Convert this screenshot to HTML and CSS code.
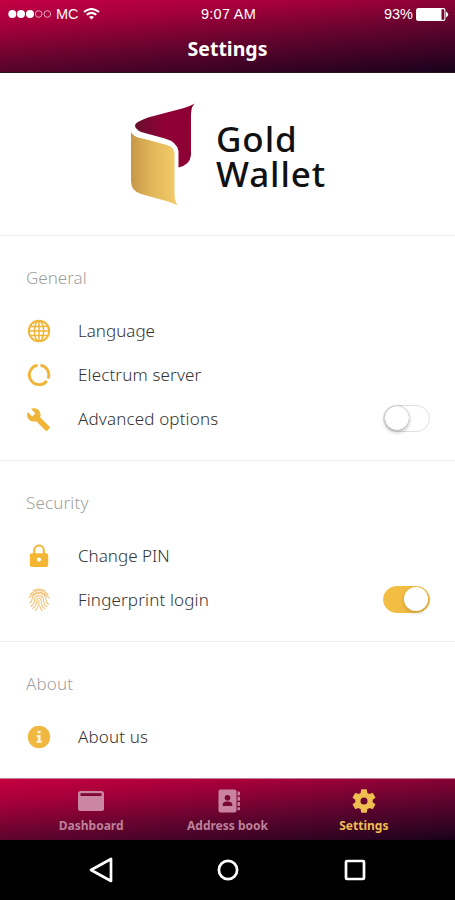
FILE: index.html
```html
<!DOCTYPE html>
<html lang="en">
<head>
<meta charset="utf-8">
<title>Settings</title>
<link rel="stylesheet" href="styles.css">
</head>
<body>
<div class="app">
  <header class="header">
    <div class="status">
      <div class="carrier">
        <svg width="44" height="10" viewBox="0 0 44 10"><g fill="#fff"><circle cx="4.300" cy="5" r="4"/><circle cx="13" cy="5" r="4"/><circle cx="22" cy="5" r="4"/></g><g fill="none" stroke="#e7a9bd" stroke-width="1"><circle cx="30.700" cy="5" r="3.300"/><circle cx="39.300" cy="5" r="3.300"/></g></svg>
        <span class="network">MC</span>
        <svg class="wifi" width="17" height="12" viewBox="0 0 17 12" fill="none" stroke="#fff" stroke-width="2"><path d="M1 4Q8.500-2 16 4M3.700 6.800Q8.500 3 13.300 6.800"/><path d="M6 9Q8.500 7 11 9L8.500 11.500Z" fill="#fff" stroke="none"/></svg>
      </div>
      <span class="time">9:07 AM</span>
      <div class="power">
        <span>93%</span>
        <svg width="33" height="13" viewBox="0 0 33 13"><rect x=".6" y=".6" width="28.300" height="11.800" rx="1.500" fill="none" stroke="#fff" stroke-width="1.100"/><rect x="1" y="1" width="24.500" height="11" fill="#fff"/><path d="M30 3.500Q34.500 6.500 30 9.500Z" fill="#fff"/></svg>
      </div>
    </div>
    <h1 class="title">Settings</h1>
  </header>

  <main class="content">
    <div class="brand">
      <svg class="mark" width="66" height="104" viewBox="0 0 66 104">
        <defs>
          <linearGradient id="red" x1="0" x2="1" y1=".5" y2=".3"><stop offset="0" stop-color="#65102d"/><stop offset=".5" stop-color="#900036"/><stop offset="1" stop-color="#8b0034"/></linearGradient>
          <linearGradient id="gold" x1="0" x2="1"><stop offset="0" stop-color="#c7974a"/><stop offset=".4" stop-color="#dfb457"/><stop offset="1" stop-color="#f4cd6b"/></linearGradient>
        </defs>
        <path fill="url(#red)" d="M65 .5C61 4 61.500 8 61 12V52Q60 62 48.500 64.500V48Q47 39 35 35.500L11 29Q-1 22 11 17.500Q14 16 18 14.500L54 5Q60 3 65 .5Z"/>
        <path fill="url(#gold)" d="M1 28C3 34 10 35 15 36L37 42Q44.500 44 44.500 51V88C44.500 95 45 99 48 102.500L38 98.500L11 91Q1 88 1 78Z"/>
        <path fill="none" stroke="#fff" stroke-width="2.600" d="M1 26C3 32.500 10 33.500 15 34.500L38 40.500Q46.500 43 46.500 51V80"/>
      </svg>
      <div class="wordmark">Gold<br>Wallet</div>
    </div>

    <section class="group">
      <h2>General</h2>
      <div class="row">
        <svg class="icon" viewBox="0 0 24 24" fill="none" stroke="#f0b537" stroke-width="1.500"><circle cx="12" cy="12" r="10.200" stroke-width="1.900"/><ellipse cx="12" cy="12" rx="4.600" ry="10.200"/><path d="M12 2v20M2 12h20M3.200 7.500h17.600M3.200 16.500h17.600"/></svg>
        <span class="label">Language</span>
      </div>
      <div class="row">
        <svg class="icon" viewBox="0 0 24 24" fill="none" stroke="#f0b537" stroke-width="2.900"><path d="M13.500 2.200A9.800 9.800 0 0 1 21.100 15.500M19.800 18A9.800 9.800 0 1 1 10.500 2.200"/></svg>
        <span class="label wide">Electrum server</span>
      </div>
      <div class="row">
        <svg class="icon wrench" viewBox="0 0 24 24" fill="#f0b537"><path d="M22.700 19l-9.100-9.100c.9-2.300.4-5-1.500-6.900-2-2-5-2.400-7.400-1.300L9 6 6 9 1.600 4.700C.4 7.100.9 10.100 2.900 12.100c1.900 1.900 4.600 2.400 6.900 1.500l9.100 9.100c.4.400 1 .4 1.400 0l2.300-2.300c.5-.4.5-1.100.1-1.400z"/></svg>
        <span class="label wide">Advanced options</span>
        <span class="switch"><span class="knob"></span></span>
      </div>
    </section>

    <section class="group">
      <h2 class="wide">Security</h2>
      <div class="row">
        <svg class="icon" viewBox="0 0 24 24"><rect x="2.800" y="9.200" width="18.400" height="13.800" rx="2" fill="#f3b632"/><path d="M7.200 10V6.300a4.800 4.800 0 0 1 9.600 0V10" fill="none" stroke="#f3b632" stroke-width="2.100"/><circle cx="12" cy="15.600" r="2.100" fill="#fff"/></svg>
        <span class="label">Change PIN</span>
      </div>
      <div class="row">
        <svg class="icon" viewBox="0 0 24 24" fill="none" stroke="#f2c174" stroke-width="1.050" stroke-linecap="round"><path d="M6 2.600Q12-.6 18 2.600M3 6.500Q12-1.500 21 6.500M1.800 10Q12-1.500 22.200 10M3 15Q5 13.500 5 11.500C5 3.500 19 3.500 19 11.500Q19 15 21.500 16M4 18Q7.500 16 7.500 12C7.500 6.500 16.500 6.500 16.500 12Q16.500 17 20 18.500M6 20.500Q9.800 17 9.800 12.500C9.800 9.500 14.200 9.500 14.200 12.500Q14.200 18.500 18 20.800M12 12.500Q12 18.500 8.500 22.500M12.700 18Q13.500 21 15.300 22.800"/></svg>
        <span class="label wide">Fingerprint login</span>
        <span class="switch on"><span class="knob"></span></span>
      </div>
    </section>

    <section class="group">
      <h2 class="wide">About</h2>
      <div class="row">
        <svg class="icon" viewBox="0 0 24 24"><circle cx="12" cy="12" r="11.200" fill="#f0b840"/><path d="M10.500 5.800h3.200v2.500h-3.200zM9.600 10h4v6h1.200v1.700H9.400V16h1.400v-4.300H9.600z" fill="#fff4d8"/></svg>
        <span class="label wide">About us</span>
      </div>
    </section>
  </main>

  <nav class="tabs">
    <div class="tab">
      <svg width="28" height="24" viewBox="0 0 28 24"><rect x="1" y="2" width="26" height="20" rx="2.500" fill="#cb86a3"/><path d="M3.500 4.200h21v2.800h-21z" fill="#7d0634"/></svg>
      <span>Dashboard</span>
    </div>
    <div class="tab">
      <svg width="28" height="24" viewBox="-2 0 28 24"><rect x="3.500" y=".5" width="18" height="23" rx="2" fill="#c883a1"/><path d="M22.500 2.500H24q1 0 1 1v2q0 1-1 1h-1.500zM22.500 7.800H24q1 0 1 1v2q0 1-1 1h-1.500zM22.500 13H24q1 0 1 1v2q0 1-1 1h-1.500zM22.500 18.200H24q1 0 1 1v1q0 1-1 1h-1.500z" fill="#c883a1"/><circle cx="12.500" cy="8.700" r="2.800" fill="#780733"/><path d="M7.700 17v-1.500q0-3 4.800-3t4.800 3V17z" fill="#780733"/></svg>
      <span>Address book</span>
    </div>
    <div class="tab active">
      <svg width="28" height="28" viewBox="0 0 24 24" fill="#efbd50"><path d="M19.430 12.980c.04-.32.07-.64.07-.98s-.03-.66-.07-.98l2.110-1.650c.19-.15.24-.42.12-.64l-2-3.460c-.12-.22-.39-.3-.61-.22l-2.490 1c-.52-.4-1.080-.73-1.690-.98l-.38-2.650C14.460 2.180 14.250 2 14 2h-4c-.25 0-.46.18-.49.42l-.38 2.650c-.61.25-1.170.59-1.690.98l-2.490-1c-.23-.09-.49 0-.61.22l-2 3.460c-.13.22-.07.49.12.64l2.110 1.650c-.04.32-.07.65-.07.98s.03.66.07.98l-2.110 1.650c-.19.15-.24.42-.12.64l2 3.460c.12.22.39.3.61.22l2.490-1c.52.4 1.080.73 1.690.98l.38 2.650c.03.24.24.42.49.42h4c.25 0 .46-.18.49-.42l.38-2.650c.61-.25 1.170-.59 1.690-.98l2.490 1c.23.09.49 0 .61-.22l2-3.460c.12-.22.07-.49-.12-.64zM12 15a3 3 0 1 1 0-6 3 3 0 0 1 0 6z"/></svg>
      <span>Settings</span>
    </div>
  </nav>
  <div class="system">
    <svg width="26" height="28" viewBox="0 0 26 28"><path d="M23 3v22L3 14Z" fill="none" stroke="#fff" stroke-width="2.700" stroke-linejoin="round"/></svg>
    <svg width="24" height="24" viewBox="1 0 24 24"><circle cx="12" cy="12" r="9.100" fill="none" stroke="#fff" stroke-width="2.700"/></svg>
    <svg width="24" height="24" viewBox="0 0 24 24"><rect x="3" y="3" width="18" height="18" rx="1" fill="none" stroke="#fff" stroke-width="2.700"/></svg>
  </div>
</div>
</body>
</html>
```
FILE: styles.css
```css
* { box-sizing: border-box; }
body { margin: 0; background: #fff; font-family: "Noto Sans", "Open Sans", sans-serif; }
svg { display: block; flex: none; }
.app { width: 455px; height: 900px; display: flex; flex-direction: column; overflow: hidden; }
.header { height: 73px; flex: none; color: #fff; background: linear-gradient(175deg, #c30043 0%, #a6003b 24%, #65042e 55%, #25021f 93%, #16021a 100%); border-bottom: 1px solid #26121e; }
.status { height: 28px; padding: 0 6px 0 8px; display: grid; grid-template-columns: 1fr auto 1fr; align-items: center; font: 14.500px/28px "Liberation Sans", sans-serif; }
.carrier, .power { display: flex; align-items: center; }
.network { margin: 0 4px 0 4px; letter-spacing: 0; }
.time { letter-spacing: .25px; }
.power { justify-content: flex-end; gap: 3px; }
.title { margin: 8px 0 0; font-size: 19.500px; line-height: 26px; font-weight: 700; text-align: center; }
.content { height: 705px; flex: none; }
.brand { height: 163px; padding: 30px 0 0 130px; display: flex; align-items: flex-start; gap: 20px; border-bottom: 1px solid #eee; }
.wordmark { margin-top: 18px; color: #111; font-size: 35px; font-weight: 500; line-height: 35px; letter-spacing: .9px; white-space: nowrap; }
.group { padding: 31px 25px 19px 26px; border-bottom: 1px solid #eee; }
.group:last-child { border-bottom: 0; }
.group h2 { margin: 0 0 20px; color: #a0a0a0; font-size: 17px; font-weight: 300; line-height: 22px; }
.row { height: 44px; display: flex; align-items: center; }
.icon { width: 24px; height: 24px; margin: 0 27px 0 1px; }
.wrench { width: 25px; height: 25px; margin: 0 27px 0 0; }
.label { color: #333; font-size: 17px; font-weight: 300; line-height: 24px; white-space: nowrap; }
.group .wide { letter-spacing: .15px; }
.switch { width: 47px; height: 27px; margin: -2px 0 0 auto; padding: 1px; display: flex; border: 1px solid #dedede; border-radius: 14px; background: #fff; }
.knob { width: 24px; height: 24px; margin-top: -.5px; border-radius: 50%; background: #fff; box-shadow: 0 2px 4px rgba(0,0,0,.28), 0 0 1px rgba(0,0,0,.5); }
.switch.on { justify-content: flex-end; background: #f3bd44; border-color: #f3bd44; }
.switch.on .knob { box-shadow: 0 2px 4px rgba(0,0,0,.18); }
.tabs { height: 62px; flex: none; padding: 0 23px; display: grid; grid-template-columns: repeat(3, 1fr); border-top: 1px solid #c87d96; background: linear-gradient(175deg, #c5003f 0%, #a5003a 24%, #65042f 56%, #26031f 93%, #17021a 100%); }
.tab { display: flex; flex-direction: column; align-items: center; padding-top: 10px; gap: 4px; color: #bd8099; font-size: 12px; line-height: 18px; font-weight: 700; white-space: nowrap; }
.tab.active { color: #efbd50; padding-top: 8px; gap: 2px; }
.system { height: 60px; flex: none; padding: 0 88px; display: flex; align-items: center; justify-content: space-between; background: #000; }
```
